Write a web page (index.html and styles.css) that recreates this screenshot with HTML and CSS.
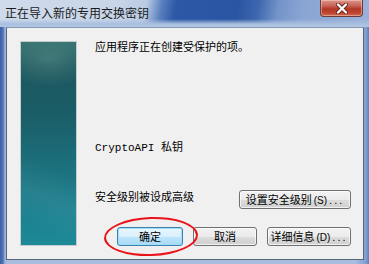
FILE: index.html
```html
<!DOCTYPE html>
<html lang="zh-CN">
<head>
    <meta charset="UTF-8">
    <meta name="viewport" content="width=device-width, initial-scale=1.0">
    <title>正在导入新的专用交换密钥</title>
    <link rel="stylesheet" href="styles.css">
</head>

<body>
    <div class="window">
        <div class="titlebar">
            <span class="title">正在导入新的专用交换密钥</span>
            <button class="close" aria-label="关闭">
                <svg width="14" height="11" viewBox="0 0 14 11">
                    <path d="M3 1.5 L11 9.5 M11 1.5 L3 9.5" stroke="#6b1d14" stroke-width="4" stroke-linecap="round"/>
                    <path d="M3 1.5 L11 9.5 M11 1.5 L3 9.5" stroke="#ffffff" stroke-width="2.4" stroke-linecap="round"/>
                </svg>
            </button>
        </div>

        <div class="frame">
            <div class="client">
                <div class="banner"></div>

                <div class="content">
                    <p class="msg">应用程序正在创建受保护的项。</p>
                    <p class="key">CryptoAPI 私钥</p>

                    <div class="level-row">
                        <span class="level">安全级别被设成高级</span>
                        <button class="btn btn-level">设置安全级别<span class="acc">(S)</span><span class="dots">...</span></button>
                    </div>

                    <div class="actions">
                        <button class="btn btn-ok">确定</button>
                        <button class="btn btn-cancel">取消</button>
                        <button class="btn btn-details">详细信息<span class="acc">(D)</span><span class="dots">...</span></button>
                        <span class="mark"></span>
                    </div>
                </div>
            </div>
        </div>
    </div>
</body>

</html>
```

FILE: styles.css
```css
body {
    margin: 0;
    padding: 0;
    width: 369px;
    height: 264px;
    overflow: hidden;
    font-family: "Noto Sans CJK SC", "Liberation Sans", sans-serif;
    font-size: 11px;
    color: #000;
}

.window {
    width: 369px;
    height: 264px;
    display: flex;
    flex-direction: column;
    background: linear-gradient(90deg, #3d61a9 0, #4f72b6 3px, #9fb6da 5px, #a9bedf 8px, #a9bedf 355px, #7f9ed0 366px, #5d7fbd 369px);
}

/* title bar */
.titlebar {
    height: 27px;
    flex: none;
    display: flex;
    align-items: flex-start;
    justify-content: space-between;
    background:
        linear-gradient(180deg, rgba(176, 198, 228, 0) 0, rgba(176, 198, 228, 0) 19px, #a9bfdf 24px, #b3c7e3 27px),
        linear-gradient(100deg, #cfdbeb 0, #c8d5e8 115px, #b9cae2 145px, #5b80bf 160px, #2d58a5 174px, #2a55a2 235px, #3c66ae 255px, #7393c8 275px, #8aa5d3 300px, #9ab2db 369px);
}

.title {
    margin: 4px 0 0 5px;
    font-size: 12px;
    line-height: 17px;
    color: #1a1a1a;
}

.close {
    width: 43px;
    height: 17px;
    margin: 0 6px 0 0;
    padding: 0;
    border: 1px solid #6d3a3a;
    border-top: none;
    border-radius: 0 0 4px 4px;
    background: linear-gradient(180deg, #dc9588 0, #c9665a 35%, #b23826 55%, #bd4530 80%, #cf6a50 100%);
    box-shadow: inset 0 0 0 1px rgba(255, 220, 210, 0.45);
    display: flex;
    align-items: center;
    justify-content: center;
}

/* window body */
.frame {
    flex: 1;
    display: flex;
    padding: 0 5px 4px 6px;
}

.client {
    flex: 1;
    display: flex;
    gap: 18px;
    padding: 11px 12px 0 13px;
    background: #f0f0f0;
    border: 1px solid #56657a;
    border-top-color: #8799b3;
}

.banner {
    width: 55px;
    height: 203px;
    margin-top: 2px;
    border: 1px solid #c5cccc;
    background:
        radial-gradient(ellipse 70px 40px at 50% 8%, rgba(90, 140, 135, 0.55), rgba(90, 140, 135, 0) 70%),
        linear-gradient(200deg, rgba(255, 255, 255, 0) 60%, rgba(255, 255, 255, 0.06) 75%, rgba(255, 255, 255, 0) 90%),
        linear-gradient(180deg, #33716f 0, #1d5860 12%, #1a5d66 35%, #1c6f7c 60%, #1b8190 85%, #1e8997 100%);
}

.content {
    flex: 1;
    display: flex;
    flex-direction: column;
}

.msg {
    margin: 0;
    line-height: 14px;
}

.key {
    margin: 88px 0 0;
    line-height: 14px;
    font-family: "Liberation Mono", "Noto Sans CJK SC", monospace;
    font-size: 11px;
}

.level-row {
    margin-top: 35px;
    display: flex;
    justify-content: space-between;
    align-items: flex-start;
}

.level {
    margin-top: -1px;
    line-height: 14px;
}

/* buttons */
.btn {
    height: 19px;
    padding: 0;
    font-family: "Noto Sans CJK SC", "Liberation Sans", sans-serif;
    font-size: 11px;
    line-height: 15px;
    color: #000;
    border: 1px solid #707070;
    border-radius: 3px;
    background: linear-gradient(180deg, #f2f2f2 0, #ebebeb 50%, #dddddd 51%, #cfcfcf 100%);
    box-shadow: inset 0 0 0 1px rgba(255, 255, 255, 0.7);
}

.btn .acc {
    font-family: "Liberation Sans", sans-serif;
    font-size: 10px;
    margin-left: 2px;
}

.btn .dots {
    font-family: "Liberation Sans", sans-serif;
    letter-spacing: 2px;
    margin-left: 2px;
}

.btn-level {
    width: 112px;
}

.actions {
    position: relative;
    margin-top: 18px;
    display: flex;
    justify-content: flex-end;
    gap: 10px;
}

.btn-ok {
    width: 66px;
    border-color: #3c7fb1;
    background: linear-gradient(180deg, #eaf6fd 0, #d9f0fc 50%, #bee6fd 51%, #a7d9f5 100%);
    box-shadow: inset 0 0 0 1px #9fe0f8;
}

.btn-cancel {
    width: 64px;
}

.btn-details {
    width: 84px;
}

/* red hand drawn circle around the OK button */
.mark {
    position: absolute;
    left: 9px;
    top: -10px;
    width: 90px;
    height: 35px;
    border: 2px solid #e8141a;
    border-radius: 50%;
    transform: rotate(-2deg);
    pointer-events: none;
}
```
